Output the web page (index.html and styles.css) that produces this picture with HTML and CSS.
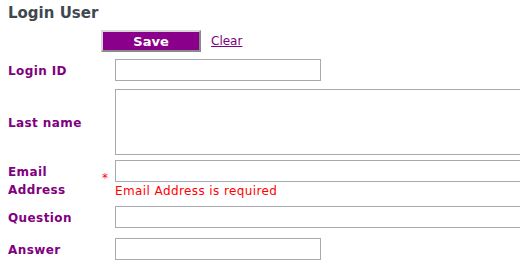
FILE: index.html
```html
<!DOCTYPE html>
<html lang="en">
<head>
    <meta charset="UTF-8">
    <title>Login User</title>
    <link rel="stylesheet" href="styles.css">
</head>
<body>
    <h2 class="page-title">Login User</h2>

    <form class="user-form" onsubmit="return false;">
        <!-- 操作按钮 -->
        <div class="form-row actions">
            <button type="submit" class="btn-save">Save</button>
            <a href="#" class="link-clear">Clear</a>
        </div>

        <div class="form-row row-login">
            <label class="field-label" for="loginId">Login ID</label>
            <span class="marker"></span>
            <div class="field"><input type="text" id="loginId" class="input-short"></div>
        </div>

        <div class="form-row row-lastname">
            <label class="field-label" for="lastName">Last name</label>
            <span class="marker"></span>
            <div class="field"><textarea id="lastName" class="input-area"></textarea></div>
        </div>

        <div class="form-row row-email">
            <label class="field-label" for="email">Email Address</label>
            <span class="marker">*</span>
            <div class="field">
                <input type="text" id="email" class="input-wide">
                <div class="field-error">Email Address is required</div>
            </div>
        </div>

        <div class="form-row row-question">
            <label class="field-label" for="question">Question</label>
            <span class="marker"></span>
            <div class="field"><input type="text" id="question" class="input-wide"></div>
        </div>

        <div class="form-row row-answer">
            <label class="field-label" for="answer">Answer</label>
            <span class="marker"></span>
            <div class="field"><input type="text" id="answer" class="input-short"></div>
        </div>
    </form>
</body>
</html>
```

FILE: styles.css
```css
/* 基础样式 */
* {
    box-sizing: border-box;
}

html, body {
    overflow: hidden;
}

body {
    margin: 4px 8px 0;
    font-family: "DejaVu Sans", Verdana, sans-serif;
    font-size: 12px;
    background: #fff;
}

.page-title {
    margin: 0;
    font-size: 15px;
    line-height: 18px;
    font-weight: bold;
    color: #3f4750;
}

/* 表单行 */
.user-form {
    margin-right: -8px;
    overflow: hidden;
}

.form-row {
    display: grid;
    grid-template-columns: 93px 14px 1fr;
    align-items: center;
}

.actions {
    display: flex;
    align-items: center;
    gap: 10px;
    margin-top: 8px;
    padding-left: 93px;
}

.row-login { margin-top: 7px; }
.row-lastname { margin-top: 8px; }
.row-email { margin-top: 5px; }
.row-question { margin-top: 7px; }
.row-answer { margin-top: 10px; }

.btn-save {
    width: 100px;
    height: 22px;
    padding: 0;
    background: #8b008b;
    color: #fff;
    font-family: "DejaVu Sans", Verdana, sans-serif;
    font-size: 13px;
    font-weight: bold;
    border: 2px solid;
    border-color: #d8d8d8 #8a8a8a #8a8a8a #d8d8d8;
    cursor: pointer;
}

.link-clear {
    color: #800080;
    font-size: 12px;
    line-height: 16px;
}

.field-label {
    font-weight: bold;
    color: #800080;
    line-height: 18px;
    letter-spacing: 0.4px;
    padding-top: 2px;
}

.row-email .field-label {
    padding-right: 20px;
}

.marker {
    color: #ff0000;
    font-size: 12px;
    line-height: 16px;
    align-self: start;
    padding-top: 10px;
    padding-left: 1px;
}

.field input,
.field textarea {
    display: block;
    margin: 0;
    border: 1px solid #a9a9b0;
    font-family: "DejaVu Sans", Verdana, sans-serif;
    font-size: 12px;
    background: #fff;
}

.input-short {
    width: 206px;
    height: 22px;
}

.input-wide {
    width: 406px;
    height: 22px;
}

.input-area {
    width: 420px;
    height: 66px;
    resize: none;
}

.field-error {
    margin-top: 1px;
    color: #ff0000;
    line-height: 16px;
    letter-spacing: 0.4px;
}
```
